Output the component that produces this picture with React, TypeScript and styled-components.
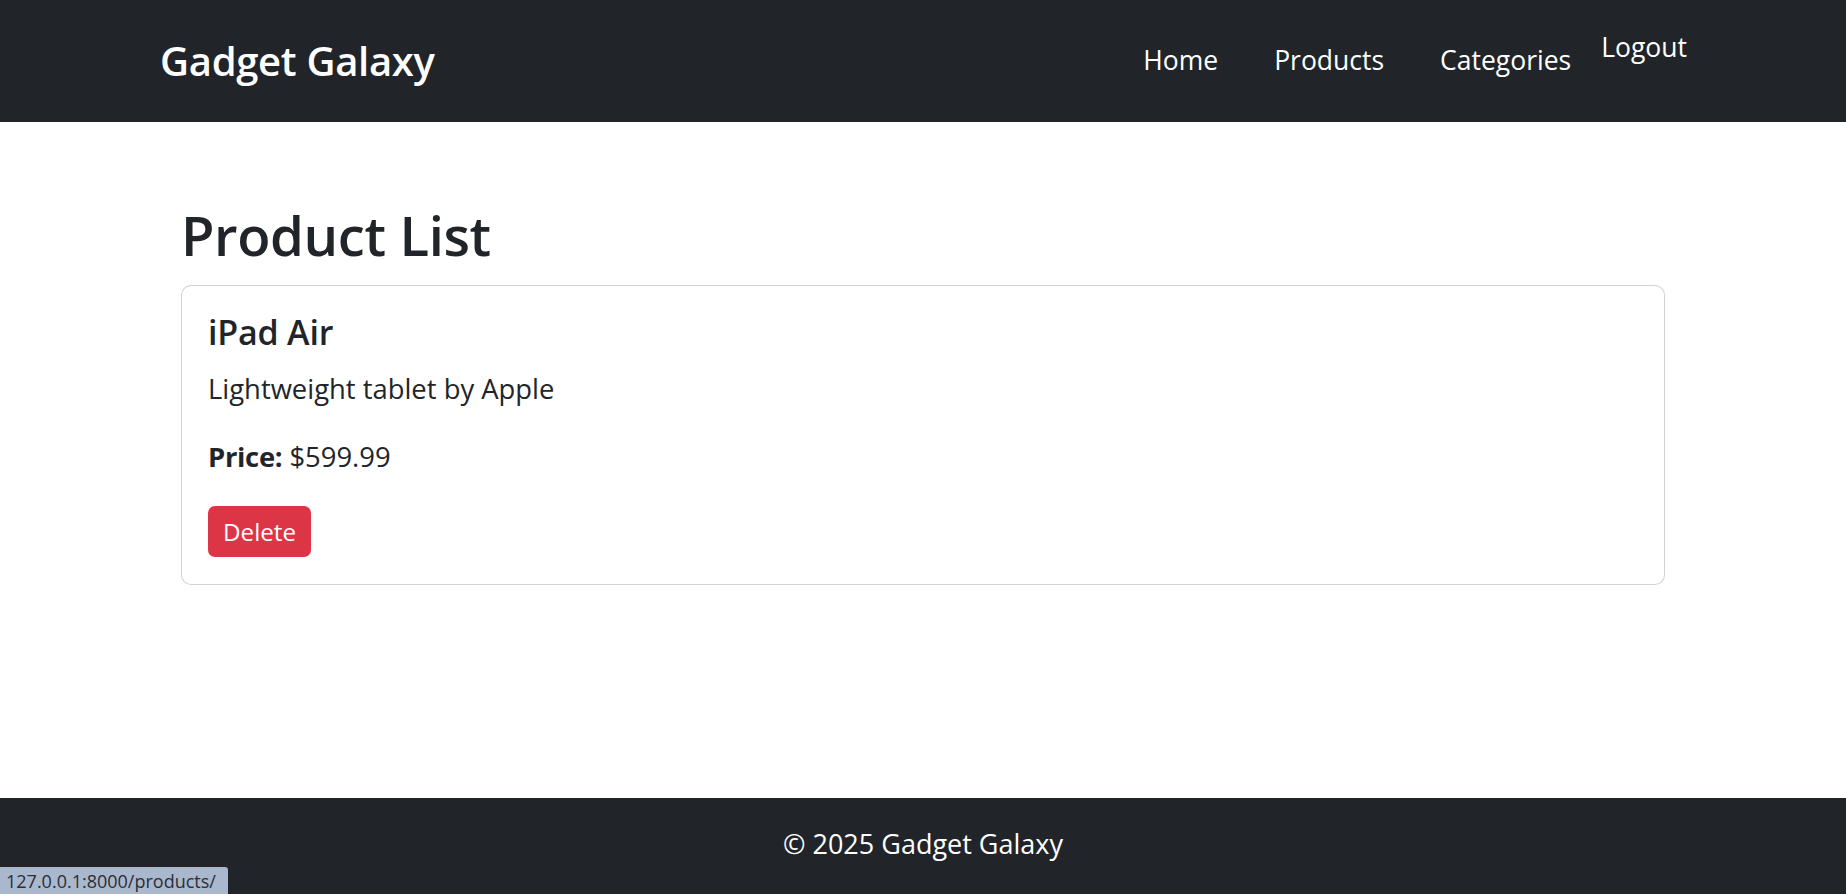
import React from "react";
import styled, { createGlobalStyle } from "styled-components";

const GlobalStyle = createGlobalStyle`
  html, body {
    margin: 0;
    padding: 0;
    background: #ffffff;
  }
  body {
    font-family: "Open Sans", "Noto Sans", "Liberation Sans", sans-serif;
    color: #212529;
  }
  * { box-sizing: border-box; }
`;

const Page = styled.div`
  min-height: 100vh;
  display: flex;
  flex-direction: column;
`;

const NavBar = styled.nav`
  height: 122px;
  background: #212529;
  display: flex;
  align-items: center;
  justify-content: space-between;
  padding: 0 159px 0 160px;
`;

const Brand = styled.a`
  color: #ffffff;
  font-size: 40px;
  font-weight: 580;
  text-decoration: none;
  line-height: 1.2;
  letter-spacing: -0.3px;
`;

const NavList = styled.ul`
  display: flex;
  align-items: center;
  list-style: none;
  margin: 0;
  padding: 0;
`;

const NavItem = styled.li<{ $raised?: boolean }>`
  display: flex;
  align-items: center;
  margin-bottom: ${(p) => (p.$raised ? "26px" : "0")};
  margin-left: ${(p) => (p.$raised ? "2px" : "0")};
`;

const NavLink = styled.a<{ $bare?: boolean }>`
  color: #ffffff;
  font-size: 26.5px;
  line-height: 1.5;
  text-decoration: none;
  padding: ${(p) => (p.$bare ? "0" : "0 28px")};
`;

const Main = styled.main`
  flex: 1;
  padding-top: 80.5px;
`;

const Container = styled.div`
  max-width: 1484px;
  margin: 0 auto;
`;

const Title = styled.h1`
  margin: 0 0 17px;
  font-size: 54.5px;
  font-weight: 580;
  line-height: 1.2;
  letter-spacing: -0.4px;
`;

const Card = styled.div`
  border: 1px solid rgba(0, 0, 0, 0.175);
  border-radius: 10px;
  padding: 26.5px 26px 26.5px;
  background: #ffffff;
`;

const CardTitle = styled.h5`
  margin: 0 0 14.8px;
  font-size: 34px;
  font-weight: 580;
  line-height: 1.2;
  letter-spacing: -0.2px;
`;

const CardText = styled.p<{ $gap: number }>`
  margin: 0 0 ${(p) => p.$gap}px;
  font-size: 27.4px;
  line-height: 1.5;
`;

const Strong = styled.strong`
  font-weight: 700;
  letter-spacing: -0.3px;
`;

const DeleteButton = styled.button`
  display: inline-flex;
  align-items: center;
  justify-content: center;
  height: 51.5px;
  padding: 0 15px;
  border: none;
  border-radius: 7px;
  background: #dc3545;
  color: #ffffff;
  font-family: inherit;
  font-size: 24.2px;
  line-height: 1;
  cursor: pointer;
`;

const Footer = styled.footer`
  height: 96px;
  background: #212529;
  color: #ffffff;
  display: flex;
  align-items: center;
  justify-content: center;
  padding-bottom: 6px;
  font-size: 27px;
`;

const StatusBar = styled.div`
  position: fixed;
  left: 0;
  bottom: 0;
  height: 27px;
  width: 228px;
  padding-left: 6px;
  display: flex;
  align-items: center;
  background: #aab8ce;
  color: #2a2e35;
  font-size: 18px;
  border-top-right-radius: 3px;
  white-space: nowrap;
`;

export default function App() {
  return (
    <>
      <GlobalStyle />
      <Page>
        <NavBar>
          <Brand href="#">Gadget Galaxy</Brand>
          <NavList>
            <NavItem>
              <NavLink href="#">Home</NavLink>
            </NavItem>
            <NavItem>
              <NavLink href="#">Products</NavLink>
            </NavItem>
            <NavItem>
              <NavLink href="#">Categories</NavLink>
            </NavItem>
            <NavItem $raised>
              <NavLink href="#" $bare>
                Logout
              </NavLink>
            </NavItem>
          </NavList>
        </NavBar>
        <Main>
          <Container>
            <Title>Product List</Title>
            <Card>
              <CardTitle>iPad Air</CardTitle>
              <CardText $gap={26.9}>Lightweight tablet by Apple</CardText>
              <CardText $gap={28.8}>
                <Strong>Price:</Strong> $599.99
              </CardText>
              <DeleteButton>Delete</DeleteButton>
            </Card>
          </Container>
        </Main>
        <Footer>© 2025 Gadget Galaxy</Footer>
      </Page>
      <StatusBar>127.0.0.1:8000/products/</StatusBar>
    </>
  );
}
